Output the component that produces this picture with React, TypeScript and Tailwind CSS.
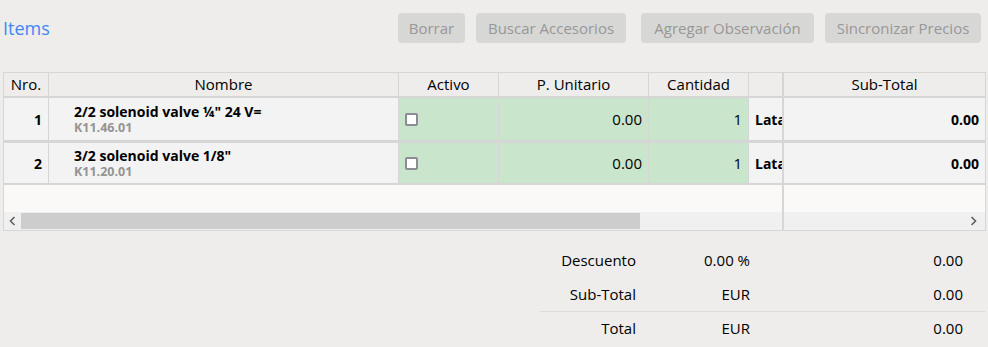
import React from "react";

const ROWS = [
  { nro: 1, name: "2/2 solenoid valve ¼\" 24 V=", code: "K11.46.01", price: "0.00", qty: 1, unit: "Lata", total: "0.00", h: "h-[45px]", sep: "border-b-[3px]" },
  { nro: 2, name: "3/2 solenoid valve 1/8\"", code: "K11.20.01", price: "0.00", qty: 1, unit: "Lata", total: "0.00", h: "h-[42px]", sep: "border-b-2" },
];

const BUTTONS = [
  { label: "Borrar", cls: "w-[67px]" },
  { label: "Buscar Accesorios", cls: "w-[150px]" },
  { label: "Agregar Observación", cls: "w-[173px] ml-[4px]" },
  { label: "Sincronizar Precios", cls: "w-[156px]" },
];

export default function App() {
  return (
    <div className="w-[988px] h-[347px] overflow-hidden bg-[#eeedeb] text-black font-['Open_Sans','Noto_Sans',sans-serif]">
      {/* header */}
      <div className="flex items-center justify-between pl-[3px] pr-[7px] pt-[13px] h-[43px]">
        <h1 className="text-[18px] text-[#3f87f5] leading-none">Items</h1>
        <div className="flex gap-[11px]">
          {BUTTONS.map(b => (
            <button key={b.label} className={`${b.cls} h-[30px] rounded-[4px] bg-[#d7d7d6] text-[#979797] text-[15px] leading-none whitespace-nowrap`}>
              {b.label}
            </button>
          ))}
        </div>
      </div>

      {/* table */}
      <div className="mt-[29px] ml-[3px] w-[983px] border border-[#d6d6d6] flex text-[15px]">
        {/* scrolling part */}
        <div className="w-[778px] flex flex-col">
          <div className="flex h-[25px] border-b-2 border-[#d6d6d6] bg-[#eeedeb]">
            <div className="w-[45px] border-r border-[#d6d6d6] flex items-center justify-center">Nro.</div>
            <div className="w-[350px] border-r border-[#d6d6d6] flex items-center justify-center">Nombre</div>
            <div className="w-[100px] border-r border-[#d6d6d6] flex items-center justify-center">Activo</div>
            <div className="w-[150px] border-r border-[#d6d6d6] flex items-center justify-center">P. Unitario</div>
            <div className="w-[100px] border-r border-[#d6d6d6] flex items-center justify-center">Cantidad</div>
            <div className="flex-1" />
          </div>
          {ROWS.map(r => (
            <div key={r.nro} className={`flex ${r.h} ${r.sep} border-[#d6d6d6] bg-[#f3f3f3]`}>
              <div className="w-[45px] border-r border-[#d6d6d6] flex items-center justify-end pr-[6px] font-bold text-[14px]">{r.nro}</div>
              <div className="w-[350px] border-r border-[#d6d6d6] flex flex-col justify-center pl-[25px]">
                <span className="font-bold text-[14px] leading-[17px] whitespace-nowrap">{r.name}</span>
                <span className="font-bold text-[12.5px] leading-[15px] text-[#949494]">{r.code}</span>
              </div>
              <div className="w-[100px] border-r border-[#d6d6d6] bg-[#c9e5cb] flex items-center pl-[6px]">
                <span className="w-[13px] h-[13px] rounded-[2px] border-2 border-[#8c8c94] bg-white" />
              </div>
              <div className="w-[150px] border-r border-[#d6d6d6] bg-[#c9e5cb] flex items-center justify-end pr-[6px]">{r.price}</div>
              <div className="w-[100px] border-r border-[#d6d6d6] bg-[#c9e5cb] flex items-center justify-end pr-[6px]">{r.qty}</div>
              <div className="flex-1 overflow-hidden whitespace-nowrap flex items-center pl-[6px] font-bold text-[14px]">{r.unit}</div>
            </div>
          ))}
          <div className="h-[27px] bg-[#faf9f8]" />
          <div className="h-[18px] bg-[#f0f0f0] flex items-center">
            <span className="w-[17px] flex justify-center text-[#606060]">
              <svg width="7" height="10" viewBox="0 0 7 10"><path d="M5.5 1 L1.5 5 L5.5 9" fill="none" stroke="currentColor" strokeWidth="1.6" /></svg>
            </span>
            <div className="h-[16px] w-[619px] bg-[#cdcdcd]" />
          </div>
        </div>

        {/* frozen part */}
        <div className="flex-1 border-l-2 border-[#d6d6d6] flex flex-col">
          <div className="h-[25px] border-b-2 border-[#d6d6d6] bg-[#eeedeb] flex items-center justify-center">Sub-Total</div>
          {ROWS.map(r => (
            <div key={r.nro} className={`${r.h} ${r.sep} border-[#d6d6d6] bg-[#f3f3f3] flex items-center justify-end pr-[6px] font-bold text-[14px]`}>
              {r.total}
            </div>
          ))}
          <div className="h-[27px] bg-[#faf9f8]" />
          <div className="h-[18px] bg-[#f0f0f0] flex items-center justify-end pr-[8px] text-[#606060]">
            <svg width="7" height="10" viewBox="0 0 7 10"><path d="M1.5 1 L5.5 5 L1.5 9" fill="none" stroke="currentColor" strokeWidth="1.6" /></svg>
          </div>
        </div>
      </div>

      {/* summary */}
      <div className="ml-[540px] w-[445px] mt-[12px] text-[15px]">
        {[
          ["Descuento", "0.00 %", "0.00"],
          ["Sub-Total", "EUR", "0.00"],
        ].map(([l, m, v]) => (
          <div key={l} className="flex h-[34px] items-center">
            <span className="w-[96px] text-right">{l}</span>
            <span className="w-[114px] text-right">{m}</span>
            <span className="w-[213px] text-right">{v}</span>
          </div>
        ))}
        <div className="flex h-[34px] items-center border-t border-[#dcdcdc]">
          <span className="w-[96px] text-right">Total</span>
          <span className="w-[114px] text-right">EUR</span>
          <span className="w-[213px] text-right">0.00</span>
        </div>
      </div>
    </div>
  );
}
